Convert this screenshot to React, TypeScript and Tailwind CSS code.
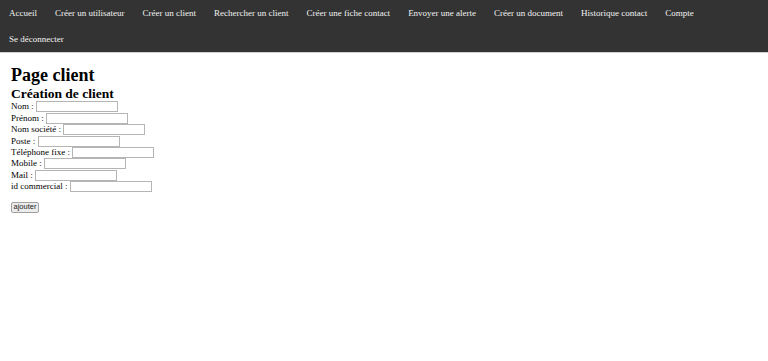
import React from "react";

const navLinks = [
  "Accueil",
  "Créer un utilisateur",
  "Créer un client",
  "Rechercher un client",
  "Créer une fiche contact",
  "Envoyer une alerte",
  "Créer un document",
  "Historique contact",
  "Compte",
  "Se déconnecter",
];

const fields = [
  "Nom :",
  "Prénom :",
  "Nom société :",
  "Poste :",
  "Téléphone fixe :",
  "Mobile :",
  "Mail :",
  "id commercial :",
];

export default function App() {
  return (
    <div className="min-h-[361px] bg-white font-['Liberation_Serif','Times_New_Roman',serif] text-black">
      {/* Top navigation */}
      <nav className="flex flex-wrap bg-[#333333] border-b border-[#cfcfcf]">
        {navLinks.map((link) => (
          <a
            key={link}
            href="#"
            className="flex h-[26px] items-center px-[9px] text-[9px] leading-none text-[#f2f2f2]"
          >
            {link}
          </a>
        ))}
      </nav>

      <main className="px-[11px]">
        <h1 className="mt-[12px] text-[18px] font-bold leading-[21px]">Page client</h1>
        <h2 className="text-[13.5px] font-bold leading-[15px]">Création de client</h2>

        <form>
          {fields.map((label) => (
            <div key={label} className="flex h-[11.45px] items-center text-[9px] leading-none">
              <span>{label}</span>
              <input
                type="text"
                className="ml-[2.25px] h-[11px] w-[82px] border border-[#b5b5b5] bg-white"
              />
            </div>
          ))}

          <button
            type="button"
            className="mt-[9px] flex h-[11px] items-center rounded-[2px] border border-[#a0a0a0] bg-[#ececec] px-[1.5px] font-['Liberation_Sans',Arial,sans-serif] text-[7.5px] leading-none text-[#222]"
          >
            ajouter
          </button>
        </form>
      </main>
    </div>
  );
}
